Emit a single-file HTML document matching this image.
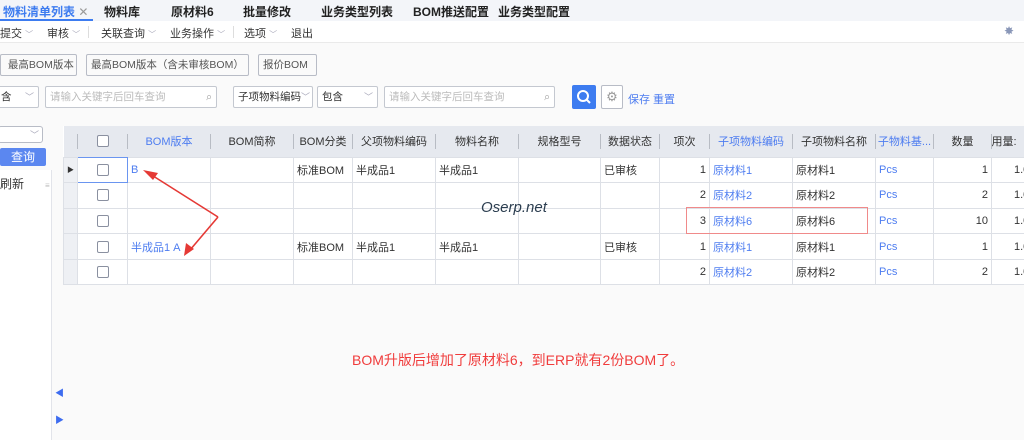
<!DOCTYPE html>
<html><head><meta charset="utf-8"><style>
*{margin:0;padding:0;box-sizing:border-box}
body{width:1024px;height:440px;overflow:hidden;background:#fafafa;font-family:"Liberation Sans","Noto Sans CJK SC",sans-serif;font-size:12px;color:#333;position:relative}
.a{position:absolute;white-space:nowrap}
.tabs{left:0;top:0;width:1024px;height:21px;background:#f3f5f9}
.tab{position:absolute;top:3px;font-size:12px;font-weight:bold;color:#222;white-space:nowrap}
.tool{left:0;top:21px;width:1024px;height:22px;background:#fff;border-bottom:1px solid #eaeaea}
.tool span{position:absolute;top:4px;font-size:11px;color:#333;white-space:nowrap}
.chev{color:#aab;font-size:8px;font-style:normal}
.btn{position:absolute;top:54px;height:22px;border:1px solid #b8bcc6;background:#fafafa;color:#555;font-size:10.5px;line-height:20px;padding:0 4px;border-radius:2px;white-space:nowrap;overflow:hidden}
.inp{position:absolute;top:86px;height:22px;border:1px solid #c4c8d0;background:#fff;border-radius:2px;font-size:10.5px;line-height:20px;padding-left:4px;color:#bbb;white-space:nowrap}
table{position:absolute;left:63px;top:126px;width:986px;border-collapse:collapse;table-layout:fixed;background:#fff}
td{height:25.6px;border:1px solid #dde0e6;padding:0 3px;font-size:11px;overflow:hidden;white-space:nowrap}
th{height:31px;background:#e6e9ef;font-weight:normal;font-size:11px;color:#333;position:relative;overflow:hidden;white-space:nowrap}
th:after{content:"";position:absolute;right:0;top:8px;height:15px;width:1px;background:#b8bcc4}
.bl{color:#4e7df0}
.r{text-align:right}
td.l{padding-left:22px}
.cb{display:inline-block;width:12px;height:12px;border:1px solid #8a90a0;border-radius:2px;background:#fff;vertical-align:middle}
td.ind{background:#eef0f4;padding:0}
</style></head><body>
<div class="a tabs">
<div class="tab" style="left:3px;color:#3d7cf0">物料清单列表 <span style="color:#999;font-weight:normal">✕</span></div>
<div style="position:absolute;left:0;top:19px;width:93px;height:2px;background:#3d7cf0"></div>
<div class="tab" style="left:104px">物料库</div>
<div class="tab" style="left:171px">原材料6</div>
<div class="tab" style="left:243px">批量修改</div>
<div class="tab" style="left:321px">业务类型列表</div>
<div class="tab" style="left:413px">BOM推送配置</div>
<div class="tab" style="left:498px">业务类型配置</div>
</div>
<div class="a tool">
<span style="left:0">提交 <i class="chev">﹀</i></span>
<span style="left:47px">审核 <i class="chev">﹀</i></span>
<span style="left:88px;top:5px;width:1px;height:12px;background:#ddd"></span>
<span style="left:101px">关联查询 <i class="chev">﹀</i></span>
<span style="left:170px">业务操作 <i class="chev">﹀</i></span>
<span style="left:233px;top:5px;width:1px;height:12px;background:#ddd"></span>
<span style="left:244px">选项 <i class="chev">﹀</i></span>
<span style="left:291px">退出</span>
<span style="left:1004px;top:3px;color:#8a97b8;font-size:12px">✸</span>
</div>
<div class="btn" style="left:0;width:77px">&nbsp;最高BOM版本</div>
<div class="btn" style="left:86px;width:163px">最高BOM版本（含未审核BOM）</div>
<div class="btn" style="left:258px;width:59px">报价BOM</div>
<div class="inp" style="left:-4px;width:43px;color:#333">含<span style="position:absolute;right:4px;color:#aab;font-size:9px">﹀</span></div>
<div class="inp" style="left:45px;width:172px">请输入关键字后回车查询<span style="position:absolute;right:4px;color:#999">⌕</span></div>
<div class="inp" style="left:233px;width:80px;color:#333">子项物料编码<span style="position:absolute;right:2px;color:#aab;font-size:9px">﹀</span></div>
<div class="inp" style="left:317px;width:61px;color:#333">包含<span style="position:absolute;right:4px;color:#aab;font-size:9px">﹀</span></div>
<div class="inp" style="left:384px;width:171px">请输入关键字后回车查询<span style="position:absolute;right:4px;color:#999">⌕</span></div>
<div class="a" style="left:572px;top:85px;width:24px;height:24px;background:#3d7cf0;border-radius:2px"><svg width="24" height="24"><circle cx="11" cy="11" r="5" stroke="#fff" stroke-width="2" fill="none"/><line x1="15" y1="15" x2="18" y2="18" stroke="#fff" stroke-width="2"/></svg></div>
<div class="a" style="left:601px;top:85px;width:22px;height:24px;border:1px solid #b8bcc6;border-radius:2px;background:#fff;color:#999;text-align:center;line-height:22px;font-size:13px">⚙</div>
<div class="a bl" style="left:628px;top:91px;font-size:11px">保存 重置</div>
<div class="a" style="left:-2px;top:126px;width:45px;height:17px;border:1px solid #b8bcc6;border-radius:3px;background:#fff"><span style="position:absolute;right:3px;top:1px;color:#aab;font-size:9px">﹀</span></div>
<div class="a" style="left:0;top:148px;width:46px;height:18px;background:#5b87f0;border-radius:2px;color:#fff;text-align:center;line-height:18px;font-size:12px">查询</div>
<div class="a" style="left:0;top:170px;width:52px;height:270px;background:#fff;border-right:1px solid #e2e4ea"></div>
<div class="a" style="left:0;top:175px;font-size:12px">刷新</div>
<div class="a" style="left:45px;top:181px;color:#bbb;font-size:8px">≡</div>
<div class="a" style="left:55px;top:386px;color:#3d6cf0;font-size:9px">◀</div>
<div class="a" style="left:55px;top:413px;color:#3d6cf0;font-size:9px">▶</div>
<table>
<colgroup><col style="width:14px"><col style="width:50px"><col style="width:83px"><col style="width:83px"><col style="width:59px"><col style="width:83px"><col style="width:83px"><col style="width:82px"><col style="width:59px"><col style="width:50px"><col style="width:83px"><col style="width:83px"><col style="width:58px"><col style="width:58px"><col style="width:60px"></colgroup>
<tr><th></th><th><span class="cb"></span></th><th class="bl">BOM版本</th><th>BOM简称</th><th>BOM分类</th><th>父项物料编码</th><th>物料名称</th><th>规格型号</th><th>数据状态</th><th>项次</th><th class="bl">子项物料编码</th><th>子项物料名称</th><th class="bl">子物料基...</th><th>数量</th><th style="text-align:left">用量:</th></tr>
<tr><td class="ind" style="font-size:7px;text-align:center">▶</td><td style="text-align:center;border:1px solid #6a95f0"><span class="cb"></span></td><td class="bl">B</td><td></td><td>标准BOM</td><td>半成品1</td><td>半成品1</td><td></td><td>已审核</td><td class="r">1</td><td class="bl">原材料1</td><td>原材料1</td><td class="bl">Pcs</td><td class="r">1</td><td class="l">1.0</td></tr>
<tr><td class="ind"></td><td style="text-align:center"><span class="cb"></span></td><td></td><td></td><td></td><td></td><td></td><td></td><td></td><td class="r">2</td><td class="bl">原材料2</td><td>原材料2</td><td class="bl">Pcs</td><td class="r">2</td><td class="l">1.0</td></tr>
<tr><td class="ind"></td><td style="text-align:center"><span class="cb"></span></td><td></td><td></td><td></td><td></td><td></td><td></td><td></td><td class="r">3</td><td class="bl">原材料6</td><td>原材料6</td><td class="bl">Pcs</td><td class="r">10</td><td class="l">1.0</td></tr>
<tr><td class="ind"></td><td style="text-align:center"><span class="cb"></span></td><td class="bl">半成品1 A</td><td></td><td>标准BOM</td><td>半成品1</td><td>半成品1</td><td></td><td>已审核</td><td class="r">1</td><td class="bl">原材料1</td><td>原材料1</td><td class="bl">Pcs</td><td class="r">1</td><td class="l">1.0</td></tr>
<tr><td class="ind"></td><td style="text-align:center"><span class="cb"></span></td><td></td><td></td><td></td><td></td><td></td><td></td><td></td><td class="r">2</td><td class="bl">原材料2</td><td>原材料2</td><td class="bl">Pcs</td><td class="r">2</td><td class="l">1.0</td></tr>
</table>
<div class="a" style="left:686px;top:207px;width:182px;height:27px;border:1px solid #f08a8a"></div>
<div class="a" style="left:481px;top:199px;font-size:15px;font-style:italic;color:#2c3e50">Oserp.net</div>
<svg class="a" style="left:0;top:0" width="1024" height="440">
<line x1="218" y1="217" x2="150" y2="174" stroke="#e53935" stroke-width="1.6"/>
<polygon points="143,170 158,173 153,180" fill="#e53935"/>
<line x1="218" y1="217" x2="190" y2="250" stroke="#e53935" stroke-width="1.6"/>
<polygon points="184,256 186,243 194,249" fill="#e53935"/>
</svg>
<div class="a" style="left:352px;top:350px;font-size:14px;color:#f03c3c">BOM升版后增加了原材料6，到ERP就有2份BOM了。</div>
</body></html>
